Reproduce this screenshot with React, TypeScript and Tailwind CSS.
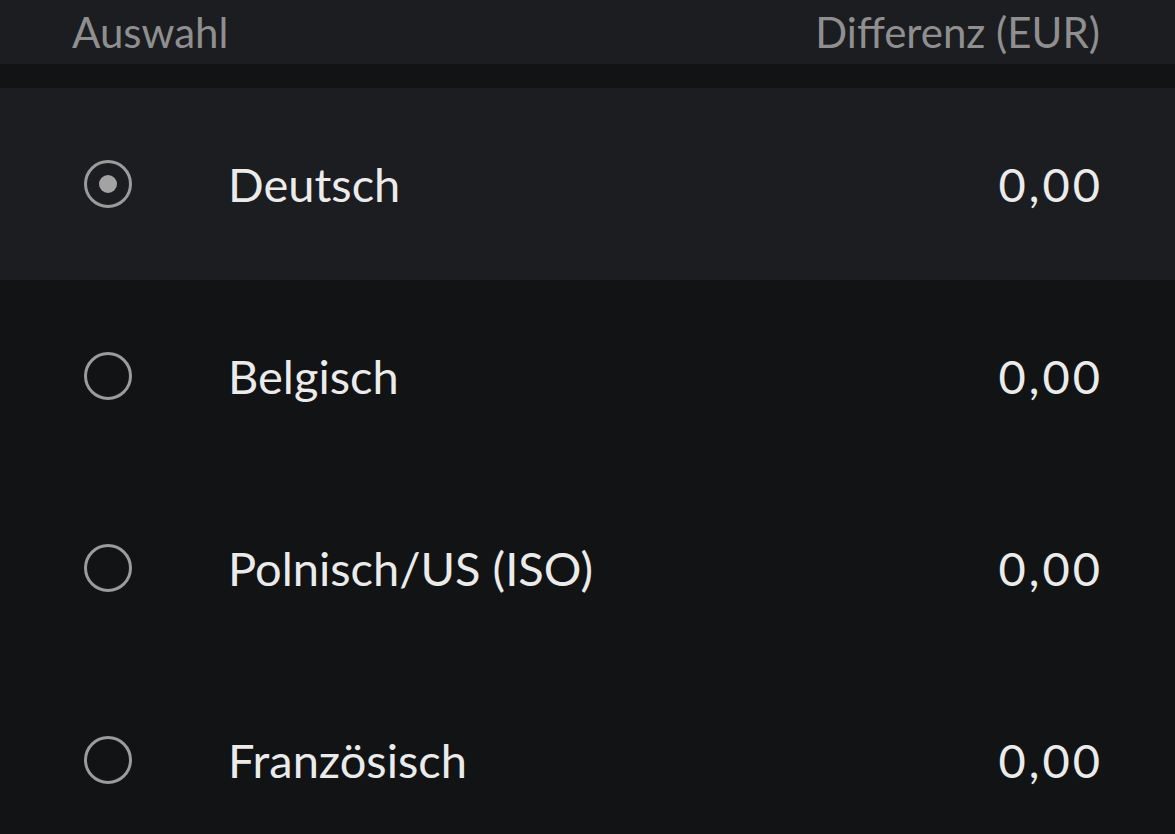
import { useState } from 'react';

const options = [
  { id: 'de', label: 'Deutsch', diff: '0,00' },
  { id: 'be', label: 'Belgisch', diff: '0,00' },
  { id: 'pl', label: 'Polnisch/US (ISO)', diff: '0,00' },
  { id: 'fr', label: 'Französisch', diff: '0,00' },
];

function Radio({ checked }: { checked: boolean }) {
  return (
    <svg className="h-12 w-12 shrink-0" viewBox="0 0 48 48" fill="none">
      <circle cx="24" cy="24" r="22.5" stroke="#9b9b9c" strokeWidth="3" />
      {checked && <circle cx="24" cy="24" r="9" fill="#a3a3a4" />}
    </svg>
  );
}

export default function App() {
  const [selected, setSelected] = useState('de');

  return (
    <div
      className="h-[834px] w-full overflow-hidden bg-[#121315]"
      style={{ fontFamily: 'Lato, "Noto Sans", sans-serif' }}
    >
      {/* Kopfzeile */}
      <div className="flex h-16 items-center justify-between bg-[#1c1d21] pl-[72px] pr-[75px] text-[42px] text-[#8f8f90]">
        <span>Auswahl</span>
        <span>Differenz (EUR)</span>
      </div>
      <div className="h-6" />

      {options.map((opt) => {
        const isSelected = opt.id === selected;
        return (
          <button
            key={opt.id}
            onClick={() => setSelected(opt.id)}
            className={`flex h-[192px] w-full items-center pl-[84px] pr-[75px] text-left ${
              isSelected ? 'bg-[#1c1d21]' : 'bg-[#121315]'
            }`}
          >
            <Radio checked={isSelected} />
            <span className="ml-[96px] flex-1 text-[47px] text-[#ebebeb]">{opt.label}</span>
            <span className="-mr-[3px] text-[47px] tracking-[3px] text-[#ebebeb]">{opt.diff}</span>
          </button>
        );
      })}
    </div>
  );
}
